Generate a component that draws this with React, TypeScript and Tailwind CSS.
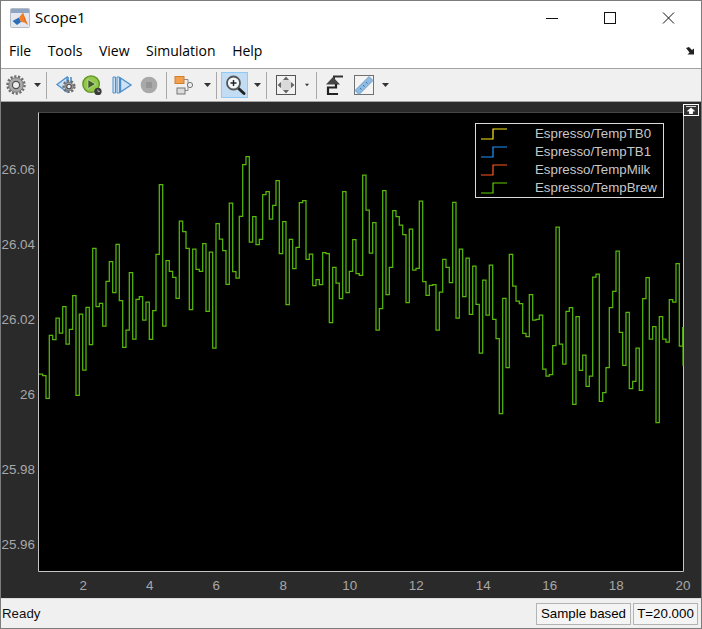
import type { ReactNode } from 'react';

// step heights read off the trace, in page pixels
const first = [677, 745, 556, 569, 504, 549, 470, 582, 538, 437, 736, 492, 660, 472, 584, 295, 470, 460, 528, 394, 335, 428, 283, 452, 592, 540, 368, 567, 448, 440, 510, 456, 568, 482, 313, 104, 528, 332, 364, 382, 445, 213, 245, 295, 479, 297, 358, 364, 281, 484, 306, 594, 221, 267, 302, 403, 159, 365, 384, 199, 44, 20];
const second = [276, 200, 284, 268, 134, 125, 207, 166, 92, 311, 215, 464, 268, 356, 292, 158, 152, 328, 312, 407, 389, 404, 308, 311, 518, 352, 399, 446, 125, 428, 364, 269, 371, 376, 75, 180, 309, 218, 540, 476, 122, 434, 352, 182, 200, 225, 254, 458, 237, 360, 355, 153, 395, 436, 406, 404, 540, 426, 328, 352, 398, 157, 504, 297];
const third = [290, 174, 343, 198, 313, 459, 240, 345, 195, 358, 416, 641, 295, 503, 163, 258, 303, 311, 400, 410, 284, 360, 358, 345, 507, 528, 524, 437, 81, 432, 492, 334, 323, 613, 350, 511, 465, 559, 528, 231, 222, 604, 578, 503, 323, 274, 153, 397, 496, 337, 566, 544, 444, 571, 296, 233, 417, 380, 668, 350, 417, 426, 299, 306, 191, 438, 383, 497];

const trace = [
  ...first.map((z) => 150 + z / 3),
  ...second.map((z) => 150 + z / 3),
  ...third.map((z) => 200 + z / 3),
];

const STEP = 10 / 3;
const tracePath = trace.reduce((d, y, i) => {
  const x = 42.67 + i * STEP;
  const end = Math.min(x + STEP, 683);
  return `${d} V${y.toFixed(1)} H${end.toFixed(1)}`;
}, 'M39 374 V374 H42.67');

const gridX = [83.3, 149.8, 216.3, 283.3, 349.8, 416.3, 483.3, 549.8, 616.3];
const xLabels = ['2', '4', '6', '8', '10', '12', '14', '16', '18', '20'];
const gridY = [
  { y: 167.5, label: '26.06' },
  { y: 242.5, label: '26.04' },
  { y: 317.5, label: '26.02' },
  { y: 392.5, label: '26' },
  { y: 467.5, label: '25.98' },
  { y: 542.5, label: '25.96' },
];

const legend = [
  { name: 'Espresso/TempTB0', color: '#ffe81a' },
  { name: 'Espresso/TempTB1', color: '#1e96ff' },
  { name: 'Espresso/TempMilk', color: '#ff5a1e' },
  { name: 'Espresso/TempBrew', color: '#5fd000' },
];

function Icon({ children }: { children: ReactNode }) {
  return (
    <svg width="24" height="24" viewBox="0 0 24 24" fill="none">
      {children}
    </svg>
  );
}

function Gear({ cx, cy, r }: { cx: number; cy: number; r: number }) {
  return (
    <g>
      <circle cx={cx} cy={cy} r={r} stroke="#6e6e6e" strokeWidth={2.4} strokeDasharray="2.2 1.6" />
      <circle cx={cx} cy={cy} r={r - 1.2} fill="#a9a9a9" stroke="#6a6a6a" strokeWidth={0.8} />
      <circle cx={cx} cy={cy} r={r * 0.42} fill="#ededed" stroke="#4f4f4f" strokeWidth={1.2} />
    </g>
  );
}

function Caret() {
  return (
    <svg width="7" height="4" viewBox="0 0 7 4">
      <path d="M0 0H7L3.5 4Z" fill="#333" />
    </svg>
  );
}

function Separator() {
  return <div className="w-px h-[27px] bg-[#a8a8a8]" />;
}

function Box({ className, children }: { className: string; children: ReactNode }) {
  return <div className={`flex items-center justify-center shrink-0 ${className}`}>{children}</div>;
}

function ToolBar() {
  return (
    <div className="flex items-center h-[32px] bg-[#f0f0f0] border-b border-[#a3a3a3] box-content">
      <Box className="w-[30px]">
        <Icon>
          <Gear cx={12} cy={12} r={8.5} />
        </Icon>
      </Box>
      <Box className="w-[12px]"><Caret /></Box>
      <div className="w-[3px]" />
      <Separator />
      <div className="w-[2px]" />
      <Box className="w-[32px]">
        <Icon>
          <path d="M4 11.5L14 4V19Z" fill="#cfe2f5" stroke="#4d8fcb" strokeWidth={1.3} />
          <path d="M15 4V10M18 4V10" stroke="#4d8fcb" strokeWidth={1.6} />
          <Gear cx={16} cy={13.5} r={5.4} />
        </Icon>
      </Box>
      <Box className="w-[22px]">
        <Icon>
          <circle cx={11} cy={11} r={9} fill="#93c84c" stroke="#5e9422" strokeWidth={1.5} />
          <path d="M7.5 6L16 11L7.5 16Z" fill="#3e5e22" stroke="#e4f2d0" strokeWidth={0.7} />
          <circle cx={18.5} cy={19} r={4} fill="#3c3c3c" />
          <path d="M18.5 17V19H20.5" stroke="#ddd" strokeWidth={0.8} />
        </Icon>
      </Box>
      <Box className="w-[36px]">
        <Icon>
          <path d="M4 4H6.5V20H4ZM8 4H10.5V20H8Z" fill="#cfe2f5" stroke="#4d8fcb" strokeWidth={1} />
          <path d="M11.5 5L22 12L11.5 19Z" fill="#cfe2f5" stroke="#4d8fcb" strokeWidth={1.4} />
        </Icon>
      </Box>
      <Box className="w-[20px]">
        <Icon>
          <circle cx={12} cy={12} r={10} fill="#a9a9a9" />
          <rect x={8.5} y={8.5} width={7} height={7} fill="#959595" />
        </Icon>
      </Box>
      <div className="w-[7px]" />
      <Separator />
      <Box className="w-[32px]">
        <Icon>
          <path d="M13 6.5H17V12H21M13 17.5H17V12" stroke="#8a8a8a" strokeWidth={1} />
          <rect x={4} y={3.5} width={9} height={7} fill="#f0a050" stroke="#d0802a" />
          <rect x={6} y={15} width={8} height={6} fill="#dcdcdc" stroke="#777" />
          <circle cx={19} cy={12} r={2.6} fill="#eee" stroke="#777" />
        </Icon>
      </Box>
      <Box className="w-[16px]"><Caret /></Box>
      <div className="w-[1px]" />
      <Separator />
      <div className="w-[4px]" />
      <Box className="w-[27px] h-[26px] bg-[#c1dcf3] border border-[#90c8f6]">
        <Icon>
          <path d="M15 15L21 20.5" stroke="#222" strokeWidth={3} strokeLinecap="round" />
          <circle cx={10.5} cy={10} r={6.5} fill="#f4f8fb" stroke="#555" strokeWidth={1.8} />
          <path d="M7.5 10H13.5M10.5 7V13" stroke="#222" strokeWidth={1.4} />
        </Icon>
      </Box>
      <Box className="w-[18px]"><Caret /></Box>
      <Separator />
      <Box className="w-[38px]">
        <Icon>
          <rect x={2.5} y={2.5} width={19} height={19} fill="#f2f2f2" stroke="#555" />
          <circle cx={12} cy={12} r={6} fill="#dadada" />
          <path d="M12 3.5L15 7H9ZM12 20.5L15 17H9ZM3.5 12L7 9V15ZM20.5 12L17 9V15Z" fill="#666" />
        </Icon>
      </Box>
      <Box className="w-[4px]"><Caret /></Box>
      <div className="w-[7px]" />
      <Separator />
      <Box className="w-[32px]">
        <Icon>
          <path d="M22 3.5H13V8" stroke="#333" strokeWidth={2} />
          <path d="M12 4L19 11.5H5Z" fill="#444" />
          <path d="M15 11V14.5H7V21H17" stroke="#222" strokeWidth={2.2} />
        </Icon>
      </Box>
      <Box className="w-[30px]">
        <Icon>
          <rect x={2.5} y={2.5} width={19} height={19} fill="#f4f4f4" stroke="#707070" />
          <path d="M3 17.5L17 3.5L21 7.5L7 21.5Z" fill="#8dbbe2" stroke="#5f93c0" strokeWidth={0.8} />
          <path d="M8 15L9.5 16.5M11 12L12.5 13.5M14 9L15.5 10.5" stroke="#3d6f9c" />
        </Icon>
      </Box>
      <Box className="w-[12px]"><Caret /></Box>
    </div>
  );
}

function ScopePlot() {
  return (
    <svg width="700" height="496" viewBox="1 102 700 496" className="block font-['Liberation_Sans',sans-serif]">
      <rect x={38.5} y={112.5} width={645} height={459} fill="#000" />
      {gridX.map((x) => (
        <g key={x}>
          <path d={`M${x} 112.5V571.5`} stroke="#676767" />
          <path d={`M${x} 112.5v6M${x} 571.5v-6`} stroke="#b0b0b0" />
        </g>
      ))}
      {gridY.map(({ y }) => (
        <g key={y}>
          <path d={`M38.5 ${y}H683.5`} stroke="#676767" />
          <path d={`M38.5 ${y}h7M683.5 ${y}h-7`} stroke="#b0b0b0" />
        </g>
      ))}
      <path d="M38.5 112.5H683.5" stroke="#8a8a8a" />
      <path d="M38.5 112.5V571.5H683.5V112.5" stroke="#c4c4c4" />
      <path d={tracePath} stroke="#57b80a" strokeWidth={1.25} fill="none" />
      {gridY.map(({ y, label }) => (
        <text key={label} x={35} y={y + 6} textAnchor="end" fontSize={13.4} fill="#a8a8a8">
          {label}
        </text>
      ))}
      {xLabels.map((label, i) => (
        <text
          key={label}
          x={i === 9 ? 683 : gridX[i]}
          y={590}
          textAnchor="middle"
          fontSize={13.4}
          fill="#a8a8a8"
        >
          {label}
        </text>
      ))}
    </svg>
  );
}

export default function App() {
  return (
    <div className="w-[702px] h-[629px] flex flex-col bg-white border border-[#7c7c7c] overflow-hidden font-['Open_Sans',sans-serif] text-black">
      <div className="flex items-center h-[33px] shrink-0 pl-[9px]">
        <svg width="20" height="20" viewBox="0 0 20 20">
          <rect x={0.5} y={0.5} width={19} height={19} rx={1} fill="#e4e8ee" stroke="#b4bcc6" />
          <rect x={1} y={1} width={18} height={4} fill="#8ea6c4" />
          <path d="M2.5 13L9 9.5L11 14L7 17Z" fill="#2a6fb8" />
          <path d="M9 9.5L13 4.5L18 17L14.5 14.5L11 14Z" fill="#f08028" />
          <path d="M13 4.5L15 12L18 17L14.5 12Z" fill="#d84018" />
        </svg>
        <span className="ml-[5px] text-[15px] leading-none">Scope1</span>
        <div className="ml-auto flex items-center mr-[25px]">
          <svg width="130" height="14" viewBox="0 0 130 14" fill="none" stroke="#111">
            <path d="M0 7.5H12" />
            <rect x={58.5} y={1.5} width={11} height={11} />
            <path d="M117 1.5L128 12.5M128 1.5L117 12.5" />
          </svg>
        </div>
      </div>

      <div className="flex items-center h-[34px] shrink-0 pl-[8px] gap-[16.5px] text-[14px] leading-none relative border-b border-[#a3a3a3] box-content">
        <span>File</span>
        <span>Tools</span>
        <span>View</span>
        <span>Simulation</span>
        <span>Help</span>
        <svg className="ml-auto mr-[5px]" width="10" height="8" viewBox="0 0 10 8">
          <path d="M0 1L3 0L6 3L8 1.5V7.5H1.5L3.5 5.5Z" fill="#222" />
        </svg>
      </div>

      <ToolBar />

      <div className="relative flex-1 min-h-0 bg-[#2a2a2a]">
        <ScopePlot />
        <div className="absolute left-[474px] top-[21px] w-[189px] h-[75px] bg-black border border-[#dcdcdc] pt-[1px] font-['Liberation_Sans',sans-serif]">
          {legend.map((row) => (
            <div key={row.name} className="flex items-center h-[18px]">
              <svg className="ml-[5px]" width="26" height="12" viewBox="0 0 26 12" fill="none">
                <path d="M0 11H12V1H26" stroke={row.color} strokeWidth={1.2} />
              </svg>
              <span className="ml-[28px] text-[13.3px] leading-none text-[#c8c8c8] whitespace-nowrap">{row.name}</span>
            </div>
          ))}
        </div>
        <div className="absolute left-[682px] top-[2px] w-[16px] h-[12px] flex items-center justify-center bg-[#333] border border-white">
          <svg width="10" height="8" viewBox="0 0 10 8">
            <path d="M0 .5H10M5 2L8.5 5H6.5V8H3.5V5H1.5Z" stroke="#fff" strokeWidth={0.8} fill="#fff" />
          </svg>
        </div>
      </div>

      <div className="flex items-center h-[30px] shrink-0 bg-[#f0f0f0] border-t border-[#dcdcdc] font-['Liberation_Sans',sans-serif] text-[13.3px] leading-none">
        <span className="ml-[1px] text-[#111]">Ready</span>
        <div className="ml-auto flex items-center gap-[2px] mr-[3px]">
          <div className="flex items-center justify-center w-[95px] h-[22px] border border-[#b4b4b4] bg-[#f4f4f4]">Sample based</div>
          <div className="flex items-center justify-center w-[65px] h-[22px] border border-[#b4b4b4] bg-[#f4f4f4]">T=20.000</div>
        </div>
      </div>
    </div>
  );
}
